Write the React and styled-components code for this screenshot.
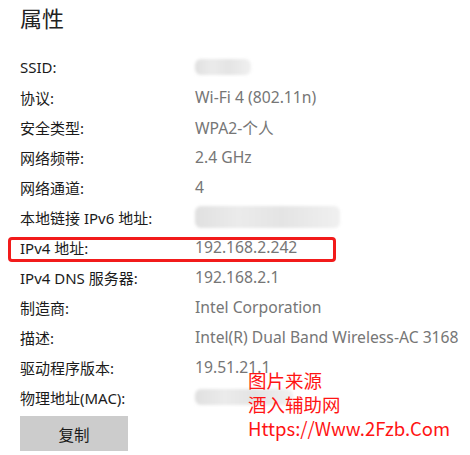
import React from "react";
import styled, { createGlobalStyle } from "styled-components";

const Global = createGlobalStyle`
  html, body { margin: 0; padding: 0; background: #fff; }
  body { font-family: "Noto Sans", "Noto Sans CJK SC", sans-serif; }
`;

const Page = styled.div`
  position: relative;
  width: 470px;
  height: 455px;
  padding: 0 0 0 20px;
  box-sizing: border-box;
  overflow: hidden;
`;

const Title = styled.h1`
  margin: 0;
  padding-top: 2px;
  height: 50px;
  font-size: 22px;
  font-weight: 400;
  color: #222;
  line-height: 30px;
  font-family: "Noto Sans CJK SC", sans-serif;
`;

const Grid = styled.div`
  display: grid;
  grid-template-columns: 175px 1fr;
  grid-auto-rows: 30px;
  align-items: center;
`;

const Label = styled.div`
  font-size: 15px;
  color: #1b1b1b;
  white-space: nowrap;
`;

const Value = styled.div`
  font-size: 15.7px;
  color: #767676;
  white-space: nowrap;
`;

const Blur = styled.div`
  width: ${(p) => p.w}px;
  height: ${(p) => p.h || 16}px;
  border-radius: 6px;
  background: linear-gradient(90deg, #e0e0e0 0%, #ebebeb 30%, #e4e4e4 60%, #f0f0f0 100%);
  filter: blur(1.5px);
`;

const Highlight = styled.div`
  position: absolute;
  left: 8px;
  top: 237px;
  width: 328px;
  height: 25px;
  border: 3px solid #f21b1b;
  border-radius: 4px;
  box-sizing: border-box;
`;

const CopyButton = styled.button`
  margin-top: 4px;
  width: 108px;
  height: 35px;
  border: none;
  background: #cccccc;
  color: #1b1b1b;
  font-size: 15.5px;
  font-family: "Noto Sans CJK SC", sans-serif;
  padding: 0;
`;

const Watermark = styled.div`
  position: absolute;
  left: 248px;
  top: 368px;
  color: #ff1414;
  font-size: 18.5px;
  line-height: 24px;
  font-family: "Noto Sans CJK SC", sans-serif;
  white-space: nowrap;
`;

const rows = [
  ["SSID:", { blur: 56 }],
  ["协议:", "Wi-Fi 4 (802.11n)"],
  ["安全类型:", "WPA2-个人"],
  ["网络频带:", "2.4 GHz"],
  ["网络通道:", "4"],
  ["本地链接 IPv6 地址:", { blur: 145, h: 22 }],
  ["IPv4 地址:", "192.168.2.242"],
  ["IPv4 DNS 服务器:", "192.168.2.1"],
  ["制造商:", "Intel Corporation"],
  ["描述:", "Intel(R) Dual Band Wireless-AC 3168"],
  ["驱动程序版本:", "19.51.21.1"],
  ["物理地址(MAC):", { blur: 98 }],
];

export default function App() {
  return (
    <>
      <Global />
      <Page>
        <Title>属性</Title>
        <Grid>
          {rows.map(([l, v]) => (
            <React.Fragment key={l}>
              <Label>{l}</Label>
              {typeof v === "string" ? (
                <Value>{v}</Value>
              ) : (
                <Blur w={v.blur} h={v.h} />
              )}
            </React.Fragment>
          ))}
        </Grid>
        <CopyButton>复制</CopyButton>
        <Highlight />
        <Watermark>
          图片来源
          <br />
          酒入辅助网
          <br />
          Https://Www.2Fzb.Com
        </Watermark>
      </Page>
    </>
  );
}
